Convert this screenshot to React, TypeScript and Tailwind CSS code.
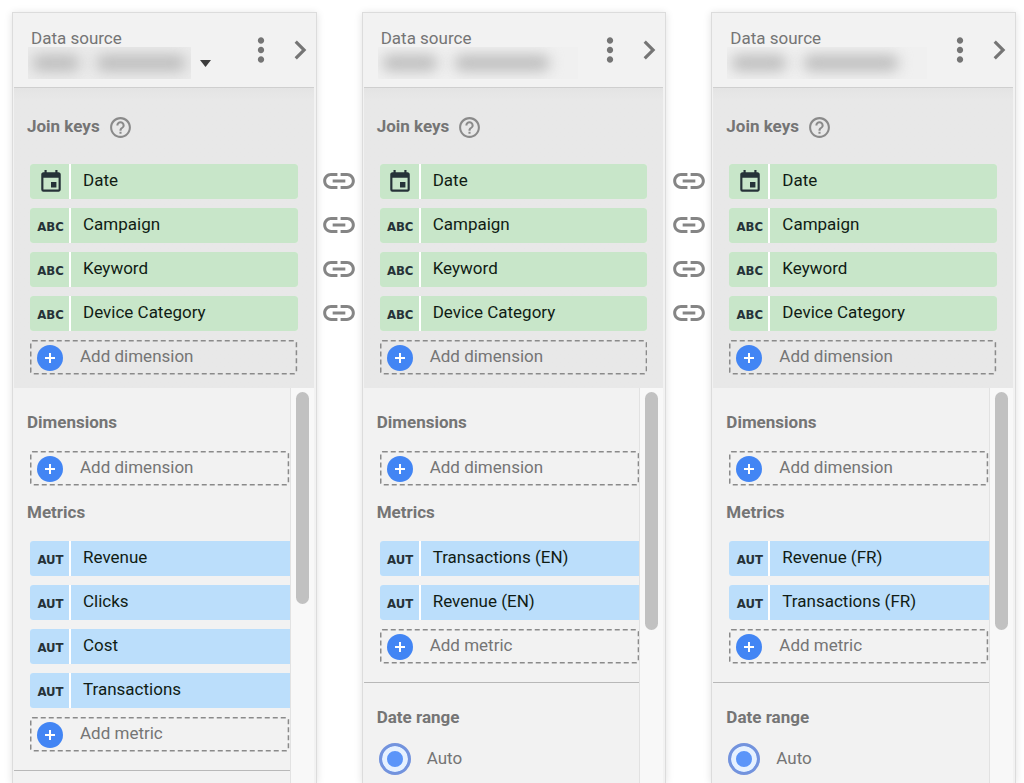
import { Fragment, type ReactNode } from 'react';
import {
  MdChevronRight,
  MdEvent,
  MdHelpOutline,
  MdLink,
  MdMoreVert,
} from 'react-icons/md';

type Source = {
  id: string;
  metrics: string[];
  selectable?: boolean;
  dateRange?: string;
};

const joinKeys = ['Date', 'Campaign', 'Keyword', 'Device Category'];

const sources: Source[] = [
  {
    id: 'all',
    metrics: ['Revenue', 'Clicks', 'Cost', 'Transactions'],
    selectable: true,
  },
  { id: 'en', metrics: ['Transactions (EN)', 'Revenue (EN)'], dateRange: 'Auto' },
  { id: 'fr', metrics: ['Revenue (FR)', 'Transactions (FR)'], dateRange: 'Auto' },
];

function TypeLabel({ children }: { children: ReactNode }) {
  return (
    <span className="pt-[2px] font-['DejaVu_Sans_Condensed','DejaVu_Sans',sans-serif] text-[13px] font-bold">
      {children}
    </span>
  );
}

function Field({ name, kind }: { name: string; kind: 'dimension' | 'metric' }) {
  const isMetric = kind === 'metric';
  const color = isMetric ? 'bg-[#bbdefb]' : 'bg-[#c8e6c9]';

  return (
    <li
      className={`flex h-[35px] gap-[2px] overflow-hidden bg-white ${
        isMetric ? 'rounded-l-[3px]' : 'rounded-[3px]'
      }`}
    >
      <span
        className={`flex w-[39px] shrink-0 items-center justify-center pl-[2px] text-[#263238] ${color}`}
      >
        {name === 'Date' ? (
          <MdEvent size={26} />
        ) : (
          <TypeLabel>{isMetric ? 'AUT' : 'ABC'}</TypeLabel>
        )}
      </span>
      <span className={`flex-1 pl-3 leading-8 text-[#101c14] ${color}`}>{name}</span>
    </li>
  );
}

function AddButton({ label }: { label: string }) {
  return (
    <button
      type="button"
      className="relative flex h-[35px] w-full items-center pl-[7px] text-[#757575]"
    >
      <svg className="absolute inset-0 h-full w-full" fill="none" aria-hidden="true">
        <rect
          x="0.75"
          y="0.75"
          rx="2"
          stroke="#8a8a8a"
          strokeWidth="1.5"
          strokeDasharray="5 3"
          className="h-[calc(100%-2px)] w-[calc(100%-2px)]"
        />
      </svg>
      <span className="flex size-[26px] items-center justify-center rounded-full bg-[#4285f4]">
        <svg width="10" height="10" viewBox="0 0 10 10" stroke="#fff" strokeWidth="2">
          <path d="M5 0v10M0 5h10" />
        </svg>
      </span>
      <span className="pb-[2px] pl-[17px]">{label}</span>
    </button>
  );
}

function Heading({ children }: { children: ReactNode }) {
  return (
    <h3 className="flex h-6 items-center gap-2 pl-[13px] font-bold text-[#757575]">
      {children}
    </h3>
  );
}

function RedactedName({ framed }: { framed?: boolean }) {
  return (
    <span
      className={`flex h-8 items-center gap-4 overflow-hidden pl-1 ${
        framed ? 'w-[163px] bg-[#ebebeb]' : 'w-[200px] bg-[#f0f0f0]'
      }`}
    >
      <span
        className={`h-4 shrink-0 rounded-full bg-[#bcbcbc] blur-[7px] ${
          framed ? 'w-12' : 'w-14'
        }`}
      />
      <span
        className={`h-4 shrink-0 rounded-full bg-[#bcbcbc] blur-[7px] ${
          framed ? 'w-[90px]' : 'w-24'
        }`}
      />
    </span>
  );
}

function SourceHeader({ selectable }: { selectable?: boolean }) {
  return (
    <header className="flex h-[75px] items-center justify-between border-b border-[#cfcfcf]">
      <div className="pt-2 pl-[14px]">
        <h2 className="pl-[3px] leading-[18px] text-[#757575]">Data source</h2>
        {selectable ? (
          <button
            type="button"
            aria-label="Select data source"
            aria-haspopup="listbox"
            className="flex items-center gap-[9px]"
          >
            <RedactedName framed />
            <svg width="11" height="7" viewBox="0 0 11 7" fill="#3c3c3c">
              <path d="M0 0h11L5.500 7z" />
            </svg>
          </button>
        ) : (
          <RedactedName />
        )}
      </div>
      <div className="flex gap-[11px] text-[#757575]">
        <button type="button" aria-label="More options" className="flex w-7 justify-center">
          <MdMoreVert size={38} className="shrink-0" />
        </button>
        <button type="button" aria-label="Expand" className="flex w-7 justify-center">
          <MdChevronRight size={38} className="shrink-0" />
        </button>
      </div>
    </header>
  );
}

function SourceCard({ source }: { source: Source }) {
  return (
    <section className="flex min-w-0 flex-1 flex-col border border-b-0 border-[#dcdcdc] bg-[#f2f2f2] pr-[2px] pl-px shadow-[0_1px_8px_rgba(0,0,0,0.12)]">
      <SourceHeader selectable={source.selectable} />

      <div className="bg-gradient-to-b from-[#e4e4e4] to-[#e8e8e8] to-[12px] pt-[27px] pb-[13px]">
        <Heading>
          Join keys
          <button type="button" aria-label="About join keys">
            <MdHelpOutline size={25} className="text-[#8a8a8a]" />
          </button>
        </Heading>
        <div className="mt-[25px] flex flex-col gap-[9px] px-4">
          <ul className="flex flex-col gap-[9px]">
            {joinKeys.map((key) => (
              <Field key={key} name={key} kind="dimension" />
            ))}
          </ul>
          <AddButton label="Add dimension" />
        </div>
      </div>

      <div className="flex min-h-0 flex-1">
        <div className="min-w-0 flex-1 overflow-hidden">
          <div className="pt-[23px]">
            <Heading>Dimensions</Heading>
            <div className="mt-4 pl-4">
              <AddButton label="Add dimension" />
            </div>
          </div>

          <div className="pt-[15px]">
            <Heading>Metrics</Heading>
            <div className="mt-4 flex flex-col gap-[9px] pl-4">
              <ul className="flex flex-col gap-[9px]">
                {source.metrics.map((metric) => (
                  <Field key={metric} name={metric} kind="metric" />
                ))}
              </ul>
              <AddButton label="Add metric" />
            </div>
          </div>

          <div className="mt-[18px] border-t border-[#b8b8b8] pt-[23px]">
            {source.dateRange && (
              <>
                <Heading>Date range</Heading>
                <label className="mt-[13px] flex items-center gap-4 pl-[15px] text-[#757575]">
                  <input
                    type="radio"
                    name={`range-${source.id}`}
                    defaultChecked
                    className="size-8 appearance-none rounded-full border-3 border-[#7393dd] bg-[#5b95f9] shadow-[inset_0_0_0_5px_#e6f1ff]"
                  />
                  {source.dateRange}
                </label>
              </>
            )}
          </div>
        </div>

        <div className="w-6 shrink-0 border-l border-[#e2e2e2] bg-[#f8f8f8] pt-1 pl-[5px]">
          <div
            className={`w-[13px] rounded-full bg-[#c1c1c1] ${
              source.metrics.length > 2 ? 'h-[212px]' : 'h-[238px]'
            }`}
          />
        </div>
      </div>
    </section>
  );
}

function JoinLinks() {
  return (
    <div className="flex w-[45px] shrink-0 flex-col gap-[9px] pt-[151px]">
      {joinKeys.map((key) => (
        <span key={key} className="flex h-[35px] items-center justify-center">
          <MdLink size={38} className="shrink-0 text-[#858585]" />
        </span>
      ))}
    </div>
  );
}

export default function App() {
  return (
    <main className="flex h-screen overflow-hidden bg-white pt-3 pr-2 pl-3 font-[Roboto,sans-serif] text-[17px]">
      {sources.map((source, index) => (
        <Fragment key={source.id}>
          {index > 0 && <JoinLinks />}
          <SourceCard source={source} />
        </Fragment>
      ))}
    </main>
  );
}
